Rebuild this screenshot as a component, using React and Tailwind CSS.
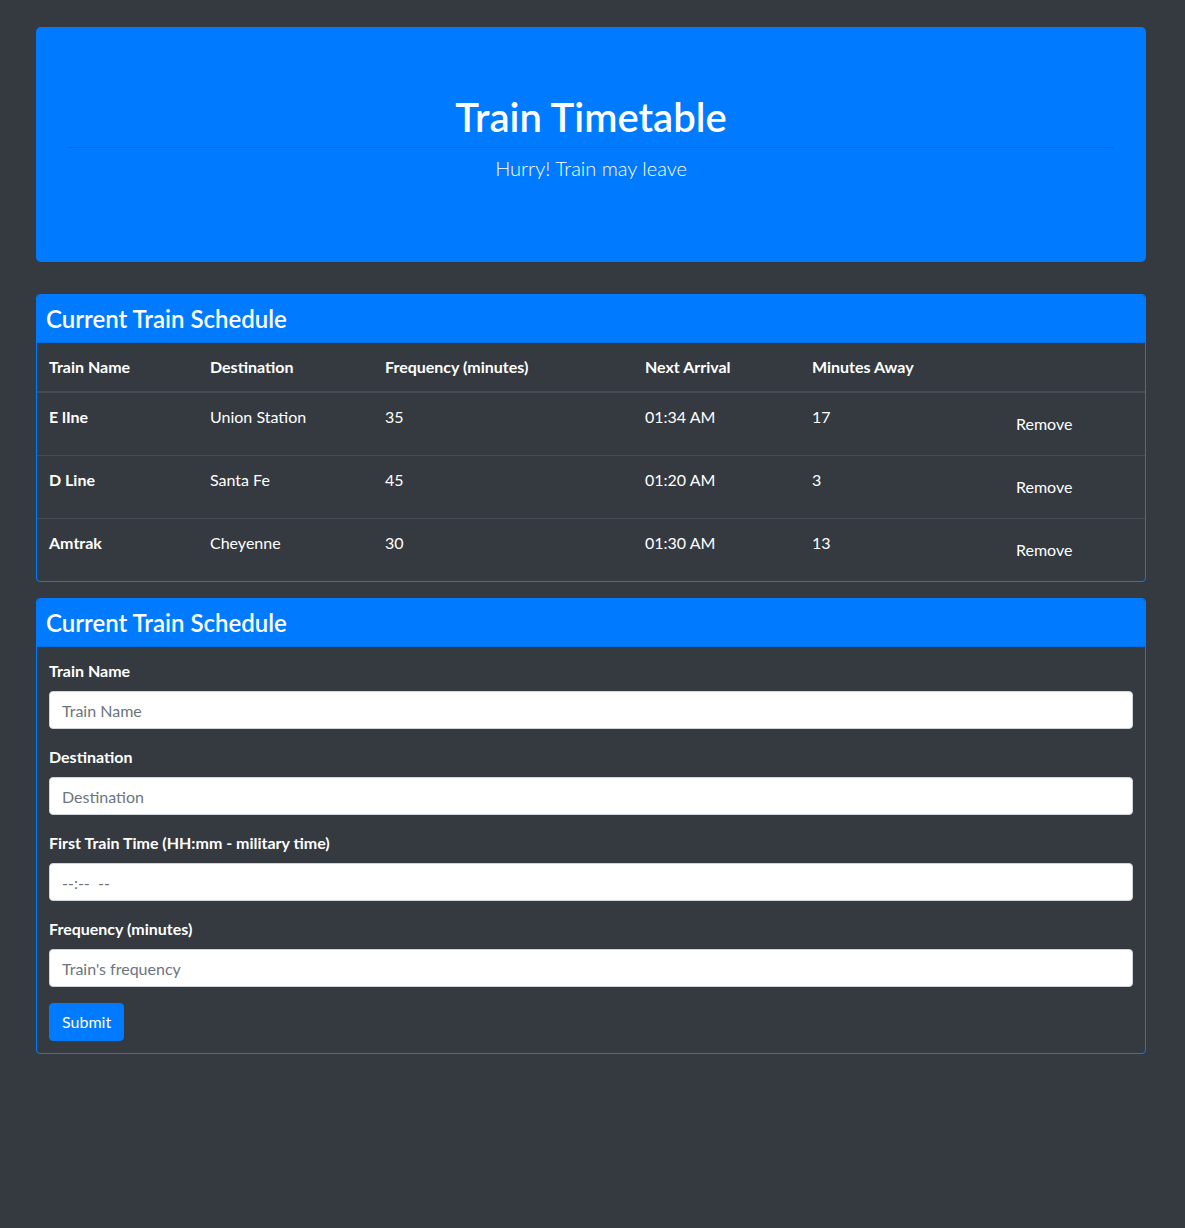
import React from 'react';

const trains = [
  { name: 'E lIne', destination: 'Union Station', frequency: '35', next: '01:34 AM', away: '17' },
  { name: 'D Line', destination: 'Santa Fe', frequency: '45', next: '01:20 AM', away: '3' },
  { name: 'Amtrak', destination: 'Cheyenne', frequency: '30', next: '01:30 AM', away: '13' },
];

const fields = [
  { label: 'Train Name', placeholder: 'Train Name' },
  { label: 'Destination', placeholder: 'Destination' },
  { label: 'First Train Time (HH:mm - military time)', placeholder: '--:--\u00a0\u00a0--' },
  { label: 'Frequency (minutes)', placeholder: "Train's frequency" },
];

const CardHeader = ({ children }) => (
  <div className="bg-[#007bff] border-b border-black/10 px-[9px] py-[9px]">
    <h4 className="text-[24px] leading-[29px] font-semibold text-white">{children}</h4>
  </div>
);

export default function App() {
  return (
    <div className="min-h-screen bg-[#343a40] text-white font-['Lato','Noto_Sans',sans-serif] text-[16px] leading-6 pt-[27px] pb-10">
      <div className="ml-[36px] w-[1110px]">
        {/* Jumbotron */}
        <div className="bg-[#007bff] rounded-[5px] px-8 pt-[66px] pb-[63px] mb-8 text-center">
          <h1 className="text-[40px] leading-[48px] font-semibold">Train Timetable</h1>
          <hr className="mt-[6px] border-0 border-t border-black/10" />
          <p className="mt-[5px] mb-4 text-[20px] leading-[30px] font-light">Hurry! Train may leave</p>
        </div>

        {/* Schedule table */}
        <div className="border border-[#007bff] rounded-[4px] overflow-hidden">
          <CardHeader>Current Train Schedule</CardHeader>
          <table className="w-full table-fixed border-collapse text-left">
            <thead>
              <tr className="border-b-2 border-[#454d55]">
                <th className="w-[161px] p-3 font-bold">Train Name</th>
                <th className="w-[175px] p-3 font-bold">Destination</th>
                <th className="w-[260px] p-3 font-bold">Frequency (minutes)</th>
                <th className="w-[167px] p-3 font-bold">Next Arrival</th>
                <th className="w-[191px] p-3 font-bold">Minutes Away</th>
                <th className="w-[154px] p-3"></th>
              </tr>
            </thead>
            <tbody>
              {trains.map((t, i) => (
                <tr key={t.name} className={i === 0 ? '' : 'border-t border-[#454d55]'}>
                  <td className="p-3 align-top font-bold">{t.name}</td>
                  <td className="p-3 align-top">{t.destination}</td>
                  <td className="p-3 align-top">{t.frequency}</td>
                  <td className="p-3 align-top">{t.next}</td>
                  <td className="p-3 align-top">{t.away}</td>
                  <td className="p-3 align-top">
                    <button className="px-3 py-[6px] border border-transparent rounded-[4px] leading-6 text-white">Remove</button>
                  </td>
                </tr>
              ))}
            </tbody>
          </table>
        </div>

        {/* Add train form */}
        <div className="mt-4 border border-[#007bff] rounded-[4px] overflow-hidden">
          <CardHeader>Current Train Schedule</CardHeader>
          <form className="p-3" onSubmit={(e) => e.preventDefault()}>
            {fields.map((f) => (
              <div key={f.label} className="mb-4">
                <label className="block mb-2 font-bold">{f.label}</label>
                <input
                  type="text"
                  placeholder={f.placeholder}
                  className="block w-full h-[38px] px-3 py-[6px] bg-white text-[#495057] border border-[#ced4da] rounded-[4px] placeholder:text-[#6c757d] outline-none"
                />
              </div>
            ))}
            <button type="submit" className="h-[38px] px-3 bg-[#007bff] text-white rounded-[4px] border border-[#007bff]">
              Submit
            </button>
          </form>
        </div>
      </div>
    </div>
  );
}
